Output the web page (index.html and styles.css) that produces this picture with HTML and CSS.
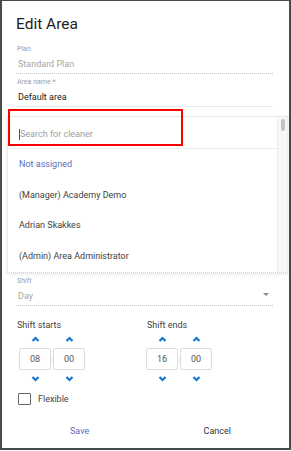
FILE: index.html
```html
<!DOCTYPE html>
<html lang="en">
<head>
    <meta charset="UTF-8">
    <meta name="viewport" content="width=device-width, initial-scale=1.0">
    <title>Edit Area</title>
    <link rel="stylesheet" href="styles.css">
</head>
<body>

    <div class="dialog">
        <h2 class="title">Edit Area</h2>

        <div class="field field-disabled field-plan">
            <div class="field-label">Plan</div>
            <div class="field-value">Standard Plan</div>
        </div>

        <div class="field field-area">
            <div class="field-label">Area name *</div>
            <div class="field-value">Default area</div>
        </div>

        <!-- room for the cleaner select, covered by the open menu -->
        <div class="cleaner-slot"></div>

        <div class="field field-disabled field-shift">
            <div class="field-label">Shift</div>
            <div class="field-value">Day</div>
            <span class="select-arrow"></span>
        </div>

        <div class="times">
            <div class="time-group">
                <div class="time-title">Shift starts</div>
                <div class="time-row time-row-first">
                    <div class="spinner">
                        <svg class="chev" width="9" height="6" viewBox="0 0 9 6"><polyline points="1.5,5 4.5,2 7.5,5"/></svg>
                        <div class="time-box">08</div>
                        <svg class="chev" width="9" height="6" viewBox="0 0 9 6"><polyline points="1.5,1 4.5,4 7.5,1"/></svg>
                    </div>
                    <span class="colon">:</span>
                    <div class="spinner">
                        <svg class="chev" width="9" height="6" viewBox="0 0 9 6"><polyline points="1.5,5 4.5,2 7.5,5"/></svg>
                        <div class="time-box">00</div>
                        <svg class="chev" width="9" height="6" viewBox="0 0 9 6"><polyline points="1.5,1 4.5,4 7.5,1"/></svg>
                    </div>
                </div>
            </div>
            <div class="time-group">
                <div class="time-title">Shift ends</div>
                <div class="time-row">
                    <div class="spinner">
                        <svg class="chev" width="9" height="6" viewBox="0 0 9 6"><polyline points="1.5,5 4.5,2 7.5,5"/></svg>
                        <div class="time-box">16</div>
                        <svg class="chev" width="9" height="6" viewBox="0 0 9 6"><polyline points="1.5,1 4.5,4 7.5,1"/></svg>
                    </div>
                    <span class="colon">:</span>
                    <div class="spinner">
                        <svg class="chev" width="9" height="6" viewBox="0 0 9 6"><polyline points="1.5,5 4.5,2 7.5,5"/></svg>
                        <div class="time-box">00</div>
                        <svg class="chev" width="9" height="6" viewBox="0 0 9 6"><polyline points="1.5,1 4.5,4 7.5,1"/></svg>
                    </div>
                </div>
            </div>
        </div>

        <label class="check">
            <span class="check-box"></span>
            <span>Flexible</span>
        </label>

        <div class="actions">
            <button type="button" class="btn btn-save">Save</button>
            <button type="button" class="btn btn-cancel">Cancel</button>
        </div>

        <!-- open dropdown menu for the cleaner field -->
        <div class="menu">
            <div class="menu-list">
                <div class="menu-search"><span class="caret"></span>Search for cleaner</div>
                <div class="menu-item menu-item-active">Not assigned</div>
                <div class="menu-item">(Manager) Academy Demo</div>
                <div class="menu-item">Adrian Skakkes</div>
                <div class="menu-item">(Admin) Area Administrator</div>
            </div>
            <div class="menu-scroll"><div class="menu-thumb"></div></div>
        </div>

        <div class="highlight"></div>
    </div>

</body>
</html>
```

FILE: styles.css
```css
body {
    margin: 0;
    font-family: Roboto, "Liberation Sans", sans-serif;
    background-color: #ffffff;
}

.dialog {
    position: relative;
    width: 291px;
    height: 450px;
    box-sizing: border-box;
    border: 2px solid #4a4a4a;
    border-top-width: 1px;
    padding: 0 16px 0 14px;
    background-color: #ffffff;
}

.title {
    margin: 13px 0 0 0;
    font-size: 15.5px;
    font-weight: 400;
    line-height: 20px;
    color: #212121;
}

.field {
    position: relative;
    padding-bottom: 2px;
    border-bottom: 1px solid #e6e6e6;
}

.field-label {
    font-size: 7px;
    line-height: 10px;
    color: #9e9e9e;
    padding-left: 1px;
    margin-bottom: 3px;
}

.field-value {
    font-size: 9px;
    line-height: 14px;
    color: #212121;
    padding-left: 2px;
}

.field-disabled {
    border-bottom: 1px dotted #c8c8c8;
}

.field-disabled .field-value {
    color: #a6a6a6;
}

.field-plan {
    margin-top: 10px;
}

.field-area {
    margin-top: 3px;
}

.cleaner-slot {
    height: 169px;
}

.select-arrow {
    position: absolute;
    right: 4px;
    top: 17px;
    border-left: 3.5px solid transparent;
    border-right: 3.5px solid transparent;
    border-top: 3.5px solid #8a8a8a;
}

.times {
    display: grid;
    grid-template-columns: 130px 1fr;
    margin-top: 13px;
}

.time-title {
    font-size: 9px;
    line-height: 12px;
    color: #424242;
    padding-left: 1px;
}

.time-row {
    display: flex;
    align-items: center;
    margin-top: 5px;
}

.time-row-first {
    padding-left: 3px;
}

.spinner {
    display: flex;
    flex-direction: column;
    align-items: center;
    gap: 6px;
}

.chev {
    display: block;
    fill: none;
    stroke: #1976d2;
    stroke-width: 2.2;
}

.time-box {
    width: 32px;
    height: 22px;
    box-sizing: border-box;
    border: 1px solid #dcdcdc;
    border-radius: 2px;
    font-size: 9px;
    line-height: 20px;
    text-align: center;
    color: #555555;
}

.colon {
    width: 2px;
    font-size: 8px;
    color: #9e9e9e;
    text-align: center;
}

.check {
    display: flex;
    align-items: center;
    gap: 7px;
    margin-top: 11px;
    padding-left: 2px;
    font-size: 9px;
    color: #424242;
}

.check-box {
    width: 13px;
    height: 12px;
    box-sizing: border-box;
    border: 1.5px solid #666666;
    border-radius: 1px;
}

.actions {
    display: flex;
    justify-content: space-between;
    margin-top: 19px;
    padding: 0 42px 0 54px;
}

.btn {
    background: none;
    border: none;
    padding: 0;
    font-family: Roboto, "Liberation Sans", sans-serif;
    font-size: 9px;
    line-height: 14px;
    cursor: pointer;
}

.btn-save {
    color: #5c6bc0;
}

.btn-cancel {
    color: #333333;
}

.menu {
    position: absolute;
    left: 5px;
    top: 115px;
    width: 279px;
    height: 155px;
    display: flex;
    background-color: #ffffff;
    border: 1px solid #ececec;
    border-bottom: 1px dotted #cfcfcf;
    box-shadow: 0 1px 3px rgba(0, 0, 0, 0.12);
}

.menu-list {
    flex: 1;
}

.menu-search {
    position: relative;
    height: 32px;
    box-sizing: border-box;
    border-bottom: 1px solid #ececec;
    padding-left: 11px;
    font-size: 9px;
    line-height: 34px;
    color: #9e9e9e;
}

.caret {
    display: inline-block;
    width: 1px;
    height: 11px;
    background-color: #555555;
    vertical-align: middle;
}

.menu-item {
    height: 30.5px;
    padding-left: 11px;
    font-size: 9px;
    line-height: 30.5px;
    color: #424242;
}

.menu-item-active {
    color: #5c6bc0;
}

.menu-scroll {
    width: 9px;
    background-color: #f7f7f7;
    border-left: 1px solid #ececec;
}

.menu-thumb {
    width: 4px;
    height: 12px;
    margin: 2px auto 0;
    border-radius: 2px;
    background-color: #c4c4c4;
}

.highlight {
    position: absolute;
    left: 6px;
    top: 108px;
    width: 175px;
    height: 37px;
    box-sizing: border-box;
    border: 2px solid #ff0000;
}
```
